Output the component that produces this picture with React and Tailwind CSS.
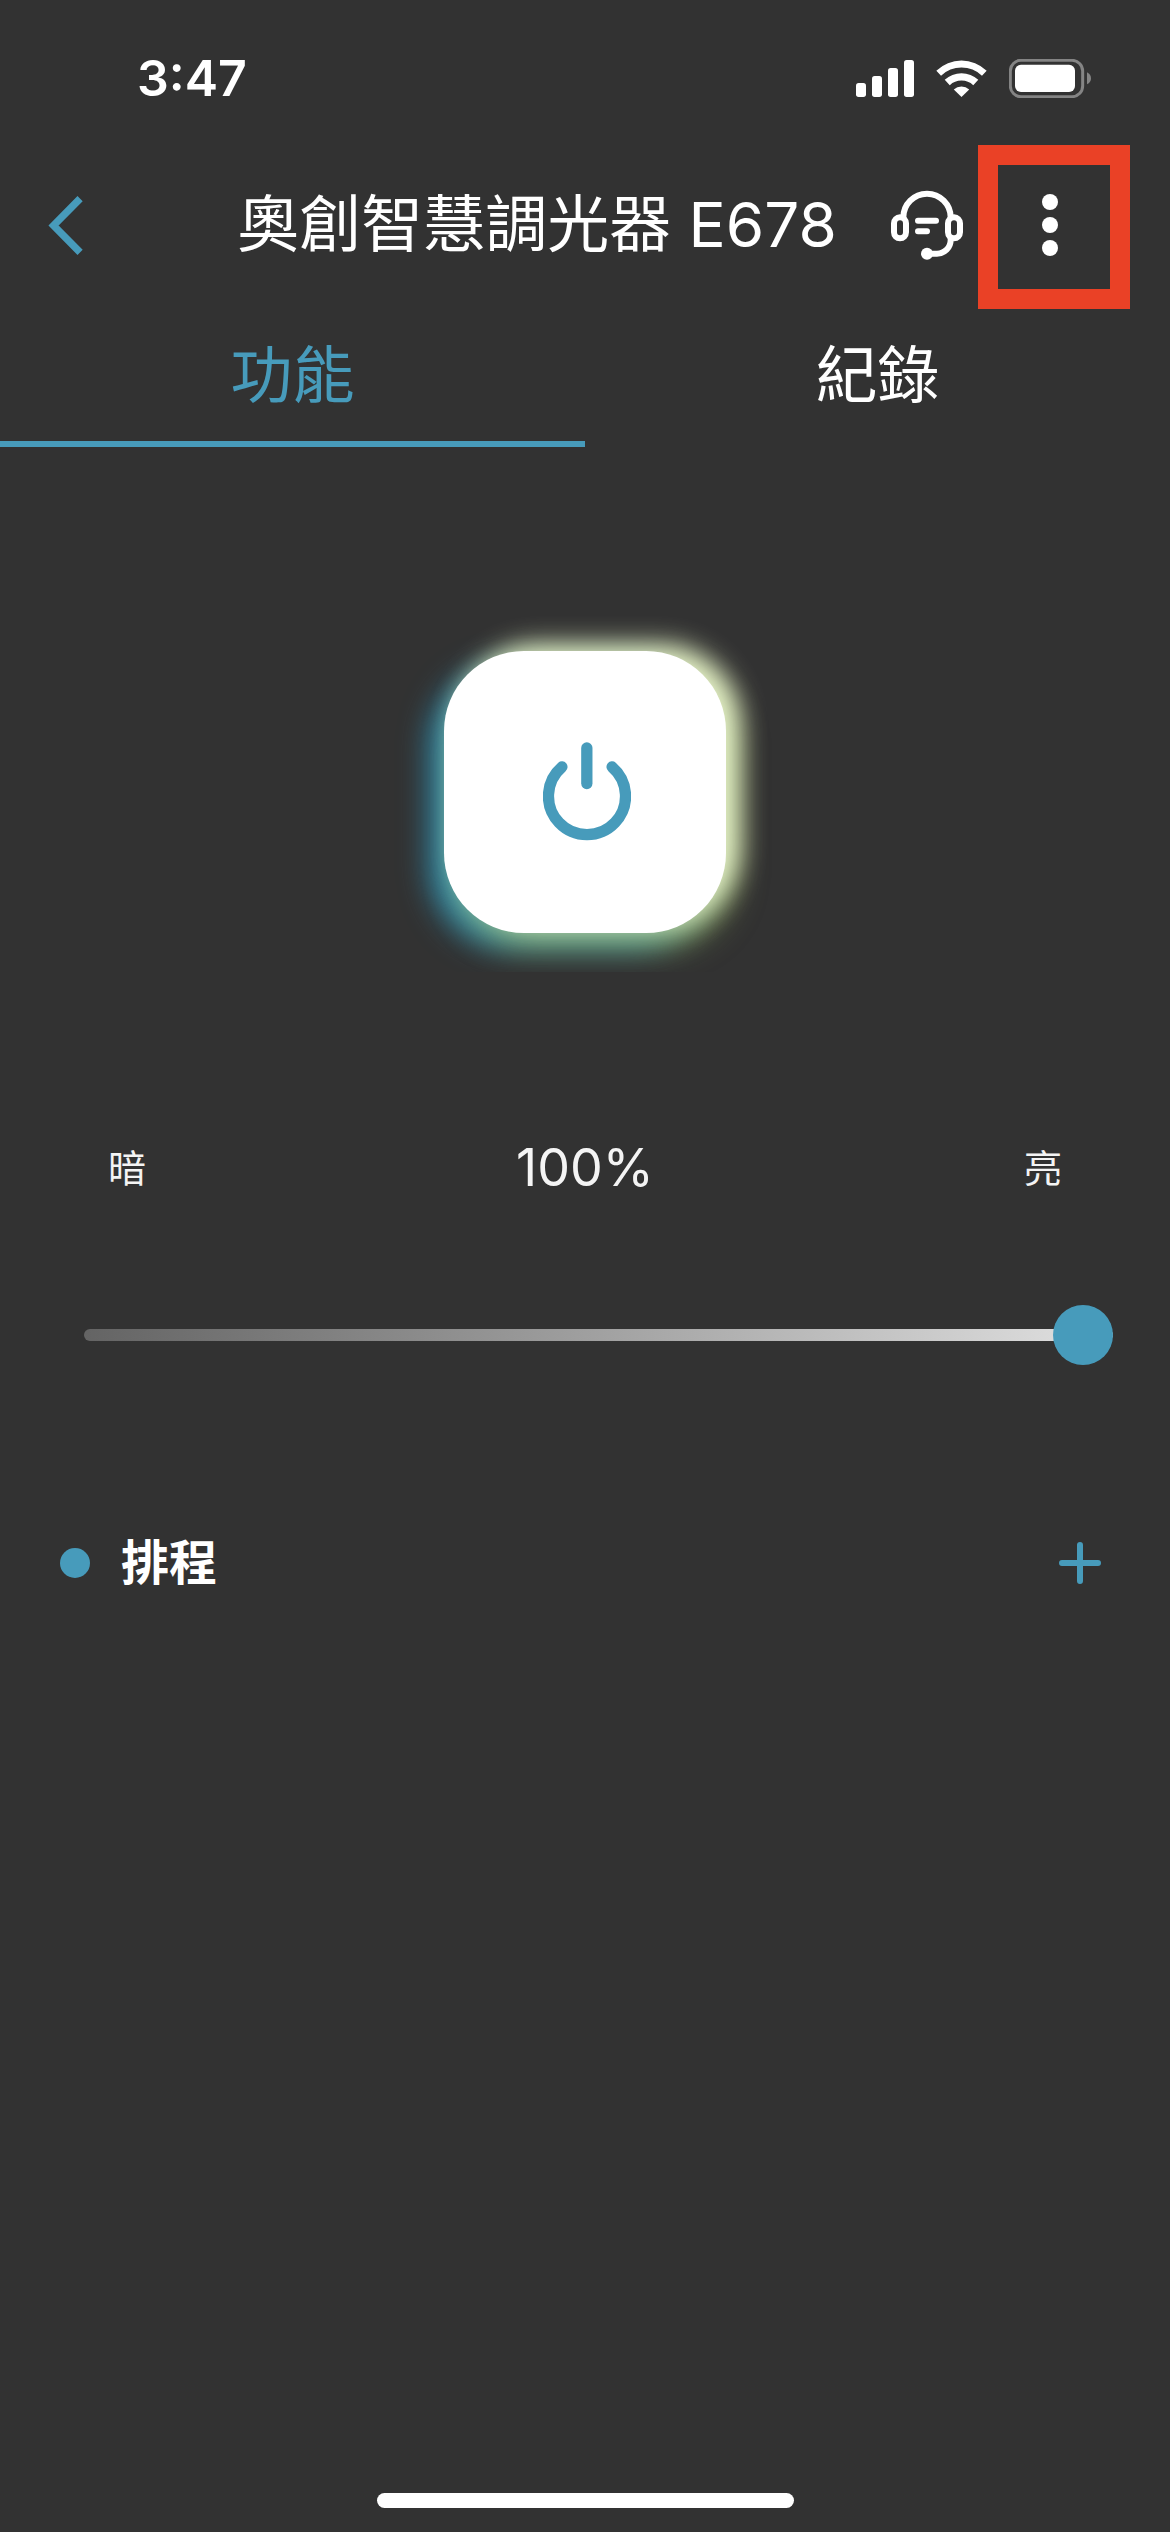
import React, { useState } from 'react';

const StatusBar = () => (
  <div className="flex items-center justify-between h-[156px] pl-[137px] pr-[79px]">
    <span className="text-[50px] leading-none font-semibold">3:47</span>
    <div className="flex items-center gap-[22px]">
      <svg className="w-[58px] h-[37px]" viewBox="0 0 174 111" fill="currentColor">
        <rect x="0" y="69" width="30" height="42" rx="8" />
        <rect x="48" y="48" width="30" height="63" rx="8" />
        <rect x="96" y="24" width="30" height="87" rx="8" />
        <rect x="144" y="0" width="30" height="111" rx="8" />
      </svg>
      <svg className="w-[51px] h-[37px]" viewBox="0 0 152 110" fill="currentColor">
        <path d="M1 32A108 108 0 0 1 151 32L137 47A87 87 0 0 0 15 47Z" />
        <path d="M26 59A73 73 0 0 1 126 59L111 75A51 51 0 0 0 41 75Z" />
        <path d="M53 88A34 34 0 0 1 99 88L76 110Z" />
      </svg>
      <svg className="w-[82px] h-[39px]" viewBox="0 0 246 117">
        <rect x="4" y="4" width="217" height="109" rx="32" fill="none" stroke="#848484" strokeWidth="9" />
        <rect x="18" y="17" width="180" height="82" rx="18" fill="#fff" />
        <path d="M234 40Q246 46 246 58T234 76Z" fill="#848484" />
      </svg>
    </div>
  </div>
);

const HeadsetIcon = () => (
  <svg
    className="w-[74px] h-[70px]"
    viewBox="0 0 222 210"
    fill="none"
    stroke="currentColor"
    strokeWidth="18"
    strokeLinecap="round"
  >
    <path d="M40 82A71 71 0 0 1 182 82" />
    <rect x="12" y="82" width="36" height="63" rx="18" />
    <rect x="174" y="82" width="36" height="63" rx="18" />
    <path d="M84 92H138M84 124H111" />
    <path d="M182 148v2a41 41 0 0 1-41 41H111" />
    <circle cx="111" cy="191" r="18" fill="currentColor" stroke="none" />
  </svg>
);

const Header = () => (
  <header className="flex items-center h-[138px] pr-[60px]">
    <button type="button" aria-label="返回" className="w-[184px] pl-12">
      <svg className="w-[35px] h-[59px] text-[#479bbb]" viewBox="0 0 104 178" fill="none">
        <path d="M96 8L16 89L96 170" stroke="currentColor" strokeWidth="22" />
      </svg>
    </button>
    <h1 className="flex-1 text-center text-[62px] leading-none whitespace-nowrap">奧創智慧調光器 E678</h1>
    <button type="button" aria-label="客服">
      <HeadsetIcon />
    </button>
    <button type="button" aria-label="更多" className="relative flex items-center justify-center w-[120px] h-[120px] ml-[26px]">
      <svg className="w-[16px] h-[62px]" viewBox="0 0 16 62" fill="currentColor">
        <circle cx="8" cy="8" r="8" />
        <circle cx="8" cy="31" r="8" />
        <circle cx="8" cy="54" r="8" />
      </svg>
      {/* Highlight frame around the menu button */}
      <span className="absolute -left-3 -right-5 -top-5 -bottom-6 border-20 border-[#ea4126] pointer-events-none" />
    </button>
  </header>
);

const tabs = [
  { id: 'function', label: '功能' },
  { id: 'history', label: '紀錄' }
];

const App = () => {
  const [activeTab, setActiveTab] = useState('function');
  const [power, setPower] = useState(true);
  const [brightness, setBrightness] = useState(100);

  return (
    <div className="flex flex-col min-h-screen bg-[#323232] text-white font-['Inter','Noto_Sans_CJK_TC',sans-serif]">
      <StatusBar />
      <Header />

      <div role="tablist" className="grid grid-cols-2">
        {tabs.map((tab) => (
          <button
            key={tab.id}
            type="button"
            role="tab"
            aria-selected={activeTab === tab.id}
            onClick={() => setActiveTab(tab.id)}
            className={`h-[153px] pt-4 border-b-6 text-[62px] leading-none ${
              activeTab === tab.id ? 'border-[#479bbb] text-[#479bbb]' : 'border-transparent'
            }`}
          >
            {tab.label}
          </button>
        ))}
      </div>

      <main className="flex-1">
        {/* Power button */}
        <div className="flex justify-center pt-[204px] pb-[39px] overflow-hidden">
          <button
            type="button"
            aria-label="電源"
            aria-pressed={power}
            onClick={() => setPower(!power)}
            className="flex items-center justify-center w-[282px] h-[282px] pl-1 rounded-[80px] bg-white text-[#479bbb] shadow-[14px_-7px_26px_#e8f4c8,10px_16px_30px_#a3bd6090,-14px_14px_30px_#2f8db0]"
          >
            <svg className="w-[88px] h-[100px]" viewBox="0 0 265 299" fill="none" stroke="currentColor" strokeWidth="34" strokeLinecap="round">
              <path d="M57 74A116 116 0 1 0 208 74" />
              <path d="M132 17V124" />
            </svg>
          </button>
        </div>

        {/* Brightness */}
        <div className="flex items-center justify-between mt-[160px] px-[108px] h-[72px] text-[#f4f4f4]">
          <span className="text-[38px] leading-none">暗</span>
          <output htmlFor="brightness" className="text-[52px] leading-none">{brightness}%</output>
          <span className="text-[38px] leading-none">亮</span>
        </div>
        <div className="flex mt-[101px] pl-[84px] pr-[57px]">
          <input
            id="brightness"
            type="range"
            aria-label="亮度"
            min="0"
            max="100"
            value={brightness}
            onChange={(e) => setBrightness(Number(e.target.value))}
            className="w-full h-[60px] appearance-none bg-transparent [&::-webkit-slider-runnable-track]:h-3 [&::-webkit-slider-runnable-track]:rounded-full [&::-webkit-slider-runnable-track]:bg-linear-to-r [&::-webkit-slider-runnable-track]:from-[#646464] [&::-webkit-slider-runnable-track]:to-[#e2e2e2] [&::-webkit-slider-thumb]:appearance-none [&::-webkit-slider-thumb]:w-[60px] [&::-webkit-slider-thumb]:h-[60px] [&::-webkit-slider-thumb]:-mt-6 [&::-webkit-slider-thumb]:rounded-full [&::-webkit-slider-thumb]:bg-[#479bbb]"
          />
        </div>

        {/* Schedule */}
        <section className="flex items-center mt-[162px] h-[72px] pl-[60px] pr-[69px]">
          <span className="w-[30px] h-[30px] rounded-full bg-[#479bbb]" />
          <h2 className="ml-[31px] text-[48px] leading-none font-bold">排程</h2>
          <button type="button" aria-label="新增排程" className="ml-auto text-[#479bbb]">
            <svg className="w-[42px] h-[42px]" viewBox="0 0 42 42" fill="none" stroke="currentColor" strokeWidth="6" strokeLinecap="round">
              <path d="M21 3V39M3 21H39" />
            </svg>
          </button>
        </section>
      </main>

      <div className="w-[417px] h-[15px] mx-auto mb-6 rounded-full bg-white" />
    </div>
  );
};

export default App;
